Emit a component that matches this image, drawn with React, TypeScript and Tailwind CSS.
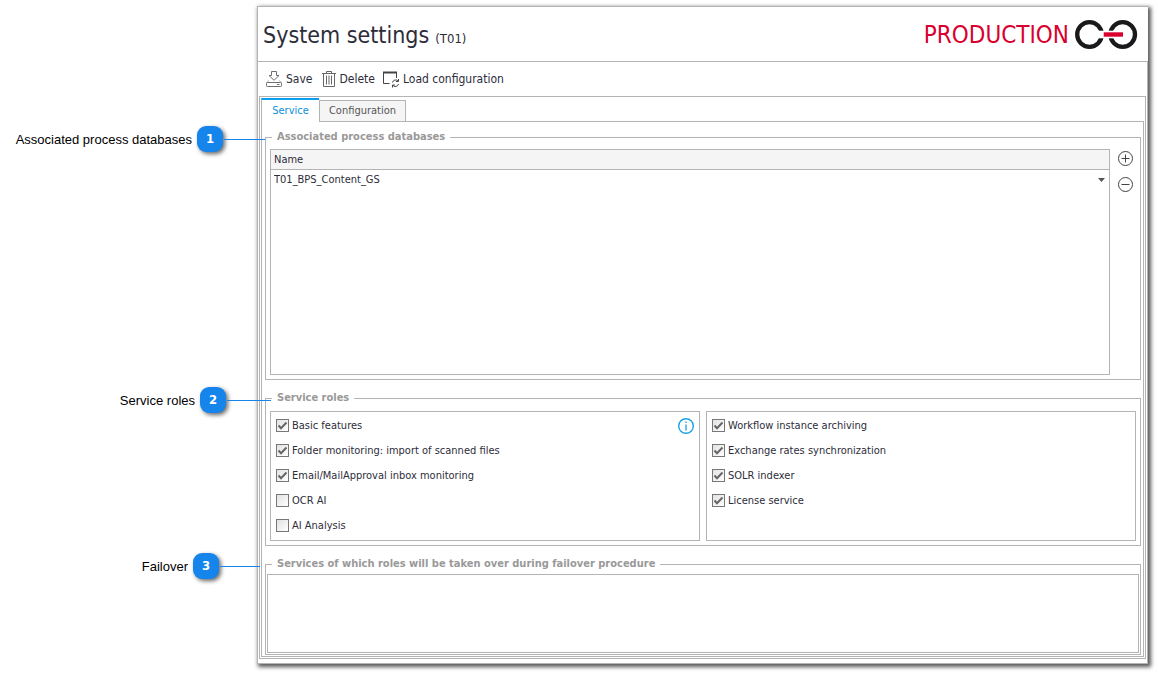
import { useState } from "react";
import type { ReactNode } from "react";

function Callout({
  label,
  number,
  className,
  line,
}: {
  label: string;
  number: number;
  className: string;
  line: string;
}) {
  return (
    <div className={`flex h-[26px] items-center whitespace-nowrap ${className}`}>
      <span className="mr-[5px] pt-[2px] font-['Liberation_Sans',Arial,sans-serif] text-[13px] leading-4 text-black">
        {label}
      </span>
      <span className="flex size-[26px] items-center justify-center rounded-[9px] bg-[#1585ec] text-[13px] leading-4 font-bold text-white shadow-[2px_2px_4px_rgba(0,0,0,0.6)]">
        {number}
      </span>
      <span className={`ml-px h-px bg-[#1585ec] ${line}`} />
    </div>
  );
}

function SaveIcon() {
  return (
    <svg width="16" height="16" viewBox="0 0 16 16" fill="none" stroke="#6f6f6f" aria-hidden="true">
      <path d="M5.500 .5h5v4H13L8 9.300 3 4.500h2.500z" />
      <path d="M3 9.500 .5 11.500M13 9.500l2.500 2" strokeOpacity=".5" />
      <rect x=".5" y="11.500" width="15" height="4" rx=".8" />
      <path d="M11 13.500h2.500" />
    </svg>
  );
}

function TrashIcon() {
  return (
    <svg width="14" height="16" viewBox="0 0 14 16" fill="none" stroke="#666" aria-hidden="true">
      <path d="M0 2.500h14M4.500 2.500v-2h5v2M1.500 2.500v13h11v-13" />
      <path d="M4.500 4.500v9M7 4.500v9M9.500 4.500v9" />
    </svg>
  );
}

function LoadIcon() {
  return (
    <svg width="17" height="17" viewBox="0 0 17 17" fill="none" stroke="#444" aria-hidden="true">
      <path d="M6.500 12.500h-6V1.500h13v5.500" />
      <path d="M0 1.500h14" strokeWidth="2" />
      <path d="M9.500 11.500a3.200 3.200 0 0 1 5.500-1.500M15.500 8v2.500H13M15.500 13a3.200 3.200 0 0 1-5.500 1.500M9.500 16.500V14H12" />
    </svg>
  );
}

function Logo() {
  return (
    <svg width="63" height="30" viewBox="0 0 63 30" role="img" aria-label="Production">
      <circle cx="14.500" cy="14.500" r="12.300" fill="none" stroke="#1a1a1c" strokeWidth="4.300" />
      <circle cx="47.700" cy="14.500" r="12.300" fill="none" stroke="#1a1a1c" strokeWidth="4.300" />
      <path d="M22 10.700h18v7.600H22z" fill="#fff" />
      <path d="M28.700 12.300h19.300v4.400H28.700z" fill="#d9002f" />
    </svg>
  );
}

function RoundIcon({ d }: { d: string }) {
  return (
    <svg width="15" height="15" viewBox="0 0 15 15" fill="none" stroke="#444" aria-hidden="true">
      <circle cx="7.500" cy="7.500" r="7" />
      <path d={d} />
    </svg>
  );
}

function Group({ title, className, children }: { title: string; className: string; children: ReactNode }) {
  return (
    <fieldset className="min-w-0 border border-[#b4b4b4]">
      <legend className="ml-[6px] px-[5px] text-[11px] leading-[14px] font-bold text-[#999]">{title}</legend>
      <div className={className}>{children}</div>
    </fieldset>
  );
}

function Role({ label, initial }: { label: string; initial: boolean }) {
  const [checked, setChecked] = useState(initial);
  return (
    <label className="flex h-[25px] items-center gap-[3px]">
      <span className="grid size-[13px] shrink-0">
        <input
          type="checkbox"
          checked={checked}
          onChange={(e) => setChecked(e.target.checked)}
          className="col-start-1 row-start-1 size-[13px] appearance-none border border-[#777] bg-linear-to-br from-[#e2e2e2] to-white"
        />
        {checked && (
          <svg
            className="pointer-events-none col-start-1 row-start-1"
            width="13"
            height="13"
            viewBox="0 0 13 13"
            fill="none"
            stroke="#666"
            strokeWidth="2"
            aria-hidden="true"
          >
            <path d="M2.500 6.500 5 9.200 10.500 3.500" />
          </svg>
        )}
      </span>
      {label}
    </label>
  );
}

const leftRoles: [string, boolean][] = [
  ["Basic features", true],
  ["Folder monitoring: import of scanned files", true],
  ["Email/MailApproval inbox monitoring", true],
  ["OCR AI", false],
  ["AI Analysis", false],
];

const rightRoles: [string, boolean][] = [
  ["Workflow instance archiving", true],
  ["Exchange rates synchronization", true],
  ["SOLR indexer", true],
  ["License service", true],
];

export default function App() {
  return (
    <div className="flex min-h-screen items-start bg-white font-['DejaVu_Sans_Condensed','DejaVu_Sans',sans-serif] text-[11px] leading-[14px] text-[#2d2d3a]">
      <aside className="z-10 flex w-[257px] shrink-0 flex-col items-end pt-[126px]">
        <Callout label="Associated process databases" number={1} className="-mr-2 mb-[235px]" line="w-[41px]" />
        <Callout label="Service roles" number={2} className="-mr-[14px] mb-[140px]" line="w-[44px]" />
        <Callout label="Failover" number={3} className="-mr-[3px]" line="w-[40px]" />
      </aside>

      <main className="mt-[6px] mr-[10px] mb-[10px] min-w-0 flex-1 border-t border-l border-[#b4b4b4] bg-white shadow-[2px_2px_4px_1px_rgba(0,0,0,0.65)]">
        <header className="flex h-[54px] items-center justify-between pt-[2px] pr-[10px] pl-[5px]">
          <h1 className="flex items-baseline gap-[6px] pt-1 text-[23px] leading-8">
            System settings <span className="text-[13px]">(T01)</span>
          </h1>
          <div className="flex items-center gap-[6px] text-[24px] leading-8 text-[#d9002f]">
            PRODUCTION <Logo />
          </div>
        </header>

        <div className="border-t border-r border-b border-[#b4b4b4] pr-px pb-1 pl-px">
          <div className="flex h-[34px] items-center pl-[7px] text-[12px] leading-4">
            <button type="button" className="mr-[9px] flex items-center gap-1">
              <SaveIcon /> Save
            </button>
            <button type="button" className="mr-[8px] flex items-center gap-1">
              <TrashIcon /> Delete
            </button>
            <button type="button" className="flex items-center gap-[3px]">
              <LoadIcon /> Load configuration
            </button>
          </div>

          <div className="border border-[#b4b4b4] p-px">
            <div role="tablist" className="flex h-[23px] items-end">
              <button
                type="button"
                role="tab"
                aria-selected="true"
                className="h-[23px] w-[58px] border-t-2 border-l border-t-[#0a9df0] border-l-[#b4b4b4] text-center text-[#0a8fdc]"
              >
                Service
              </button>
              <button
                type="button"
                role="tab"
                aria-selected="false"
                className="h-[21px] w-[87px] border-x border-t border-[#b4b4b4] bg-[#f5f5f5] text-center text-[#555]"
              >
                Configuration
              </button>
            </div>
            <div className="flex">
              <span className="h-px w-[58px] border-l border-[#b4b4b4]" />
              <span className="h-px flex-1 bg-[#b4b4b4]" />
            </div>

            <div
              role="tabpanel"
              className="flex flex-col gap-[11px] border-x border-b border-[#b4b4b4] pt-2 pr-[2px] pb-px pl-[3px]"
            >
              <Group title="Associated process databases" className="pt-[5px] pb-1 pl-1">
                <div className="flex">
                  <div className="min-h-[226px] min-w-0 flex-1 border border-[#b4b4b4]">
                    <table className="w-full border-separate border-spacing-0 text-left">
                      <thead>
                        <tr>
                          <th className="h-5 border-b border-[#b4b4b4] bg-[#f5f5f5] px-[3px] font-normal">Name</th>
                        </tr>
                      </thead>
                      <tbody>
                        <tr>
                          <td className="h-5">
                            <div className="grid items-center">
                              <select
                                aria-label="Process database"
                                className="col-start-1 row-start-1 w-full appearance-none bg-transparent px-[3px]"
                              >
                                <option>T01_BPS_Content_GS</option>
                              </select>
                              <svg
                                className="pointer-events-none col-start-1 row-start-1 mr-1 justify-self-end"
                                width="7"
                                height="4"
                                viewBox="0 0 7 4"
                                fill="#555"
                                aria-hidden="true"
                              >
                                <path d="M0 0h7L3.500 4z" />
                              </svg>
                            </div>
                          </td>
                        </tr>
                      </tbody>
                    </table>
                  </div>
                  <div className="flex w-[30px] flex-col items-end gap-[11px] pt-[2px] pr-[7px]">
                    <button type="button" aria-label="Add">
                      <RoundIcon d="M7.500 3.500v8M3.500 7.500h8" />
                    </button>
                    <button type="button" aria-label="Remove">
                      <RoundIcon d="M3.500 7.500h8" />
                    </button>
                  </div>
                </div>
              </Group>

              <Group title="Service roles" className="px-1 pt-[6px] pb-1">
                <div className="grid grid-cols-2 gap-[6px]">
                  <div className="flex items-start justify-between border border-[#b4b4b4] pt-px pr-[5px] pb-[2px] pl-[5px]">
                    <div>
                      {leftRoles.map(([label, on]) => (
                        <Role key={label} label={label} initial={on} />
                      ))}
                    </div>
                    <button type="button" aria-label="Information" className="mt-[5px]">
                      <svg width="16" height="16" viewBox="0 0 16 16" fill="none" stroke="#1ba1e2" aria-hidden="true">
                        <circle cx="8" cy="8" r="7.300" strokeWidth="1.400" />
                        <path d="M8 6.500v6M8 3.500v1.500" strokeWidth="1.300" />
                      </svg>
                    </button>
                  </div>
                  <div className="border border-[#b4b4b4] pt-px pl-[5px]">
                    {rightRoles.map(([label, on]) => (
                      <Role key={label} label={label} initial={on} />
                    ))}
                  </div>
                </div>
              </Group>

              <Group
                title="Services of which roles will be taken over during failover procedure"
                className="px-px pt-[3px] pb-px"
              >
                <div className="min-h-[79px] border border-[#b4b4b4]" />
              </Group>
            </div>
          </div>
        </div>
      </main>
    </div>
  );
}
